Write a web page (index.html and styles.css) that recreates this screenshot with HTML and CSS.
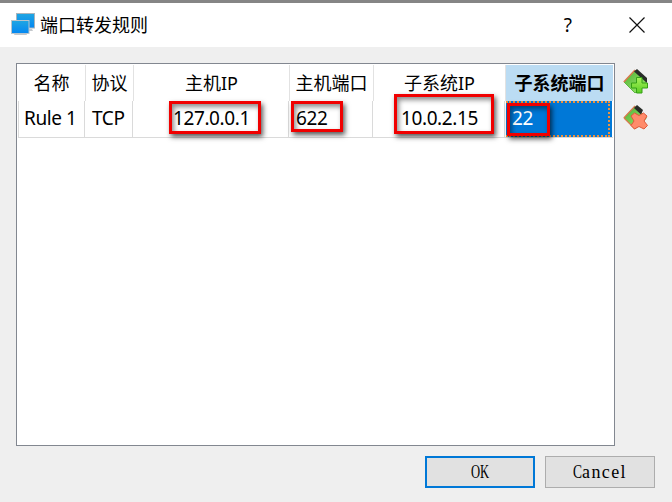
FILE: index.html
```html
<!DOCTYPE html>
<html lang="zh-CN">
<head>
<meta charset="utf-8">
<title>端口转发规则</title>
<link rel="stylesheet" href="styles.css">
</head>
<body>
<div class="dialog">
  <header class="titlebar">
    <svg class="logo" width="24" height="23" viewBox="0 0 24 23">
      <defs><linearGradient id="screen" x1="0" y1="0" x2="0" y2="1"><stop offset="0" stop-color="#20a6e2"/><stop offset="1" stop-color="#0487f2"/></linearGradient></defs>
      <path d="M14 16h7l1 2h-8z" fill="#c4c8cc"/>
      <rect x="5.5" y=".5" width="18" height="14.5" fill="url(#screen)" stroke="#a9b4bc"/>
      <path d="M4 20h11l1 2H3z" fill="#c4c8cc"/>
      <rect x=".5" y="7.500" width="17.500" height="13" fill="url(#screen)" stroke="#b9c5cc"/>
    </svg>
    <h1 class="title">端口转发规则</h1>
    <span class="help">?</span>
    <svg class="close" width="16" height="16" viewBox="0 0 16 16"><path d="M.5.5l15 15M15.500.500l-15 15" stroke="#111" stroke-width="1.200"/></svg>
  </header>
  <main class="content">
    <div class="table">
      <div class="row head">
        <div>名称</div><div>协议</div><div>主机IP</div><div>主机端口</div><div>子系统IP</div><div class="active">子系统端口</div>
      </div>
      <div class="row data">
        <div>Rule 1</div>
        <div class="protocol">TCP</div>
        <div class="host">127.0.0.1<i class="mark mark-host"></i></div>
        <div class="port">622<i class="mark mark-port"></i></div>
        <div class="guest">10.0.2.15<i class="mark mark-guest"></i></div>
        <div class="selected">22<i class="mark mark-selected"></i></div>
      </div>
    </div>
    <div class="tools">
      <svg width="25" height="26" viewBox="0 0 25 26">
        <defs><linearGradient id="card" x1="0" y1="0" x2="1" y2="1"><stop offset="0" stop-color="#4fae35"/><stop offset="1" stop-color="#a0f070"/></linearGradient>
        <linearGradient id="plus" x1="0" y1="0" x2="0" y2="1"><stop offset="0" stop-color="#a8f25a"/><stop offset="1" stop-color="#5ace24"/></linearGradient></defs>
        <path d="M1 13L12 1.500 23.500 13 12 24z" fill="url(#card)" stroke="#5fb544"/>
        <path d="M.8 13L12 1" fill="none" stroke="#d8794d" stroke-width="1.500"/>
        <path d="M11 2.500L14 0l10 9v5z" fill="#282c28"/>
        <path d="M13.500 8.500h5.500v5.500h5.500v5H19v5h-5.500v-5H8.500v-5h5z" fill="url(#plus)" stroke="#35a015"/>
      </svg>
      <svg width="25" height="26" viewBox="0 0 25 26">
        <path d="M1 13L12 1.500 23.500 13 12 24z" fill="url(#card)" stroke="#5fb544"/>
        <path d="M.8 13L12 1M1 13l11 11" fill="none" stroke="#d8794d" stroke-width="1.200"/>
        <path d="M11 3L14 0l6 5-2 4.500z" fill="#282c28"/>
        <path d="M8 11l3.500-3 4.500 2.500L20.500 8l3.500 3-3 5 3.500 4.500-3.500 3.500-5-2.500-4.500 2.500L8 20.500l3-4.500z" fill="#ff8b6b" stroke="#e0593a"/>
      </svg>
    </div>
  </main>
  <footer class="actions">
    <button class="button primary"><span class="narrow">OK</span></button>
    <button class="button"><span class="cap">C</span><span class="letters">ancel</span></button>
  </footer>
</div>
</body>
</html>
```
FILE: styles.css
```css
* { box-sizing: border-box; }
body { margin: 0; }
.dialog {
  width: 672px;
  height: 502px;
  display: flex;
  flex-direction: column;
  background: #efefef;
  border-top: 3px solid #858585;
  color: #000;
  font-family: "Noto Sans", "Noto Sans CJK SC", sans-serif;
  font-size: 18px;
}
.titlebar {
  height: 44px;
  flex: none;
  display: flex;
  align-items: center;
  padding: 0 27px 0 11px;
  background: #fff;
}
.logo { margin-top: -2px; }
.title { margin: 0 auto 0 5px; font-size: 18px; font-weight: 400; line-height: 26px; }
.help { font-size: 19px; margin-right: 57px; }
.close { flex: none; }
.content { display: flex; gap: 9px; padding: 16px 0 0 16px; }
.table {
  width: 599px;
  height: 383px;
  padding: 1px;
  background: #fff;
  border: 1px solid #828790;
}
.row { display: grid; }
.row > div { position: relative; white-space: nowrap; }
.head {
  height: 36px;
  grid-template-columns: 68px 48px 156px 84px 132px 107px;
}
.head > div {
  border-right: 1px solid #e2e2e2;
  text-align: center;
  line-height: 36px;
}
.head .active { background: #bbdcf3; border: 0; font-weight: 700; }
.data {
  height: 37px;
  grid-template-columns: 66px 48px 156px 84px 132px 108px;
  border-left: 1px solid #dadada;
  border-bottom: 1px solid #dadada;
  width: 595px;
  font-size: 19px;
  letter-spacing: -.4px;
}
.data > div { border-right: 1px solid #dadada; padding-left: 5px; line-height: 34px; }
.data .protocol { padding-left: 7px; }
.data .host { padding-left: 40px; }
.data .port { padding-left: 7px; }
.data .guest { padding-left: 28px; }
.data .selected {
  background: #0078d7;
  color: #fff;
  border: 2px dotted #ef913d;
  border-left-width: 0;
  box-shadow: 2px 0 #0078d7;
  padding-left: 6px;
  line-height: 30px;
  margin: 0 3px 0 1px;
}
.mark {
  position: absolute;
  border: 3px solid #f00000;
  box-shadow: 2px 3px 5px rgba(0, 0, 0, .65), inset 2px 3px 5px rgba(0, 0, 0, .45);
}
.mark-host { left: 36px; top: 0; width: 92px; height: 33px; }
.mark-port { left: 2px; top: 0; width: 52px; height: 31px; }
.mark-guest { left: 21px; top: -7px; width: 100px; height: 40px; }
.mark-selected { left: 1px; top: 0; width: 43px; height: 33px; }
.tools { display: flex; flex-direction: column; gap: 10px; padding-top: 6px; margin-left: -1px; }
.actions { display: flex; gap: 10px; justify-content: flex-end; padding: 10px 17px 0 0; }
.button {
  width: 110px;
  height: 32px;
  padding: 0;
  display: flex;
  align-items: center;
  justify-content: center;
  background: #e1e1e1;
  border: 1px solid #adadad;
  font: 18px "Liberation Serif", serif;
  color: #000;
}
.primary { border: 2px solid #0078d7; }
.narrow { transform: scaleX(.7); }
.cap { width: 9px; display: flex; transform: scaleX(.75); transform-origin: left; }
.letters { letter-spacing: 1.4px; }
```
